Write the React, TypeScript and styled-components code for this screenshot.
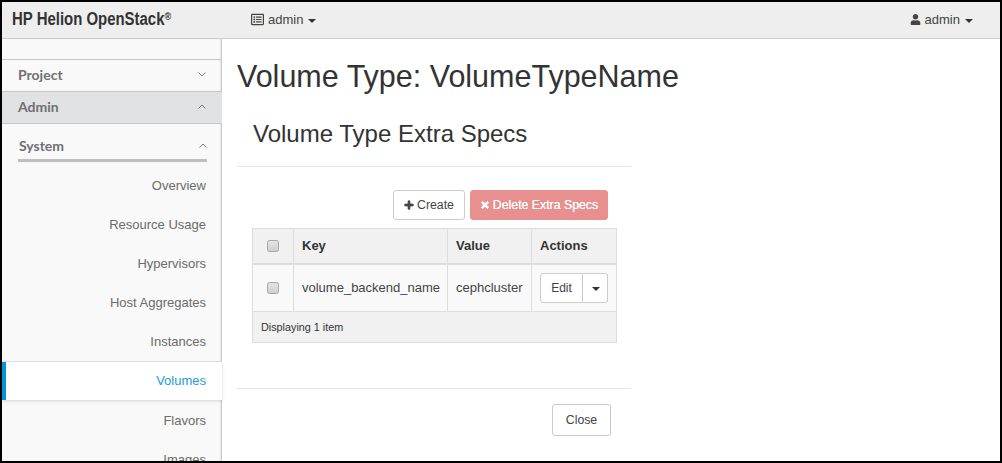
import React from "react";
import styled, { createGlobalStyle } from "styled-components";
import { FaPlus, FaTimes, FaUser, FaRegListAlt } from "react-icons/fa";

const Global = createGlobalStyle`
  html, body { margin: 0; padding: 0; background: #fff; }
  body { font-family: "Liberation Sans", Arial, sans-serif; font-size: 12px; color: #333; }
  * { box-sizing: border-box; }
`;

const Frame = styled.div`
  width: 1002px; height: 463px; border: 2px solid #000;
  overflow: hidden; display: flex; flex-direction: column; background: #fff;
`;
const Header = styled.header`
  height: 37px; flex: none; display: flex; align-items: center; background: #eee;
  border-bottom: 1px solid #ccc; padding: 0 27px 1px 10px; position: relative; z-index: 2;
`;
const Brand = styled.div`
  font-weight: 700; font-size: 18px; color: #333; width: 239px; white-space: nowrap;
  transform: scaleX(.83); transform-origin: left center;
`;
const Reg = styled.sup`font-size: 11px; line-height: 0; vertical-align: 5px;`;
const Menu = styled.div`
  display: flex; align-items: center; gap: 4px; font-size: 13px; color: #444;
`;
const Spacer = styled.div`flex: 1;`;
const Caret = styled.span`
  display: inline-block; width: 0; height: 0; margin-left: 1px; margin-top: 2px;
  border-top: 4px solid #333; border-left: 4px solid transparent; border-right: 4px solid transparent;
`;
const Body = styled.div`flex: 1; display: flex; min-height: 0;`;
const Side = styled.nav`
  width: 220px; flex: none; background: #f9f9f9; padding-top: 20px;
  box-shadow: inset -2px 0 2px -1px #bbb;
`;
const SectionRow = styled.div<{ $active?: boolean }>`
  height: 32px; display: flex; align-items: center; justify-content: space-between;
  padding: 0 16px 2px 16px; border-top: 1px solid #c8c8c8;
  background: ${p => (p.$active ? "#e1e2e4" : "#f9f9f9")};
  font-family: Lato, sans-serif; font-weight: 700; font-size: 14px; color: #6f6f73;
  ${p => (p.$active ? "" : "box-shadow: inset -2px 0 2px -1px #bbb;")}
`;
const GroupWrap = styled.div`border-top: 1px solid #c8c8c8; margin-bottom: 4px;`;
const Group = styled.div`
  height: 38px; margin: 0 15px 0 16px; border-bottom: 3px solid #bfbfbf;
  display: flex; align-items: center; justify-content: space-between; padding: 7px 0 0 1px;
  font-family: Lato, sans-serif; font-weight: 700; font-size: 14px; color: #6f6f73;
`;
const Item = styled.div<{ $active?: boolean }>`
  height: ${p => (p.$active ? "38px" : "39px")}; display: flex; align-items: center; justify-content: flex-end;
  padding-right: 16px; font-size: 13px;
  color: ${p => (p.$active ? "#1f9ad6" : "#6b6b6b")};
  ${p => p.$active ? `
    background: #fff; margin: 1px 0; padding-bottom: 1px; border-left: 4px solid #0096d6;
    box-shadow: 0 1px 3px rgba(0,0,0,.15), 0 -1px 0 #e4e4e4;
  ` : ""}
`;
const Main = styled.main`flex: 1; padding: 0 0 0 15px; min-width: 0;`;
const Title = styled.h1`
  margin: 19px 0 0; font-weight: 400; font-size: 30.5px; line-height: 36px; color: #333; white-space: nowrap;
`;
const Modal = styled.section`width: 394px;`;
const ModalHead = styled.div`padding: 27px 16px 0; border-bottom: 1px solid #e5e5e5; height: 73px;`;
const SubTitle = styled.h2`margin: 0; font-weight: 400; font-size: 24px; line-height: 26px; color: #333; white-space: nowrap;`;
const ModalBody = styled.div`padding: 23px 15px 45px; border-bottom: 1px solid #e5e5e5;`;
const Actions = styled.div`display: flex; justify-content: flex-end; gap: 5px; padding-right: 8px; margin-bottom: 8px;`;
const Btn = styled.button<{ $danger?: boolean; $w: number; $h?: number }>`
  width: ${p => p.$w}px; height: ${p => p.$h ?? 30}px; padding: 0; display: inline-flex; align-items: center; justify-content: center; gap: 3px;
  font: 12.3px "Liberation Sans", sans-serif; border-radius: 3px; cursor: pointer;
  background: ${p => (p.$danger ? "#e88f8f" : "#fff")};
  color: ${p => (p.$danger ? "#fff" : "#444")};
  border: 1px solid ${p => (p.$danger ? "#e88f8f" : "#ccc")};
  ${p => (p.$danger ? "text-shadow: 0 0 .6px #fff;" : "")}
`;
const Table = styled.table`
  width: 364px; table-layout: fixed; border-collapse: collapse; border: 1px solid #ddd; font-size: 13px;
  th, td { border: 1px solid #ddd; text-align: left; padding: 0 8px; }
  th { height: 35px; background: #f1f1f1; font-weight: 700; color: #333; border-bottom: 2px solid #ddd; }
  td { height: 48px; background: #f9f9f9; color: #444; }
`;
const Foot = styled.td`
  && { height: 31px; background: #f1f1f1; font-size: 10.8px; color: #333; }
`;
const Center = styled.span`display: flex; justify-content: center;`;
const Check = styled.span`
  display: inline-block; width: 12px; height: 12px; border: 1px solid #a6a6a6; border-radius: 2.5px;
  background: linear-gradient(#e4e4e4, #cfcfcf);
`;
const Split = styled.div`display: flex; width: 68px; height: 30px; font-size: 12px;`;
const SplitL = styled.div`
  width: 43px; display: flex; align-items: center; justify-content: center; background: #fff; color: #444;
  border: 1px solid #ccc; border-radius: 3px 0 0 3px;
`;
const SplitR = styled.div`
  width: 25px; display: flex; align-items: center; justify-content: center; background: #fff;
  border: 1px solid #ccc; border-left: 0; border-radius: 0 3px 3px 0;
`;
const Footer = styled.div`display: flex; justify-content: flex-end; padding: 15px 20px 0 0;`;

const Chevron = ({ up }: { up?: boolean }) => (
  <svg width="8" height="5" viewBox="0 0 8 5" fill="none" stroke="#777" strokeWidth="1">
    <path d={up ? "M.5 4.5 4 1l3.5 3.5" : "M.5.5 4 4 7.5.5"} />
  </svg>
);

export default function App() {
  return (
    <Frame>
      <Global />
      <Header>
        <Brand>HP Helion OpenStack<Reg>®</Reg></Brand>
        <Menu><FaRegListAlt size={13} /> admin <Caret /></Menu>
        <Spacer />
        <Menu><FaUser size={11} /> admin <Caret /></Menu>
      </Header>
      <Body>
        <Side>
          <SectionRow>Project <Chevron /></SectionRow>
          <SectionRow $active>Admin <Chevron up /></SectionRow>
          <GroupWrap><Group>System <Chevron up /></Group></GroupWrap>
          <Item>Overview</Item>
          <Item>Resource Usage</Item>
          <Item>Hypervisors</Item>
          <Item>Host Aggregates</Item>
          <Item>Instances</Item>
          <Item $active>Volumes</Item>
          <Item>Flavors</Item>
          <Item>Images</Item>
        </Side>
        <Main>
          <Title>Volume Type: VolumeTypeName</Title>
          <Modal>
            <ModalHead><SubTitle>Volume Type Extra Specs</SubTitle></ModalHead>
            <ModalBody>
              <Actions>
                <Btn $w={72}><FaPlus size={10} stroke="currentColor" strokeWidth={40} /> Create</Btn>
                <Btn $danger $w={138}><FaTimes size={10} stroke="currentColor" strokeWidth={50} /> Delete Extra Specs</Btn>
              </Actions>
              <Table>
                <colgroup><col width="41" /><col width="154" /><col width="84" /><col width="85" /></colgroup>
                <thead>
                  <tr><th><Center><Check /></Center></th><th>Key</th><th>Value</th><th>Actions</th></tr>
                </thead>
                <tbody>
                  <tr>
                    <td><Center><Check /></Center></td>
                    <td>volume_backend_name</td>
                    <td>cephcluster</td>
                    <td><Split><SplitL>Edit</SplitL><SplitR><Caret /></SplitR></Split></td>
                  </tr>
                </tbody>
                <tfoot><tr><Foot colSpan={4}>Displaying 1 item</Foot></tr></tfoot>
              </Table>
            </ModalBody>
            <Footer><Btn $w={59} $h={32}>Close</Btn></Footer>
          </Modal>
        </Main>
      </Body>
    </Frame>
  );
}
